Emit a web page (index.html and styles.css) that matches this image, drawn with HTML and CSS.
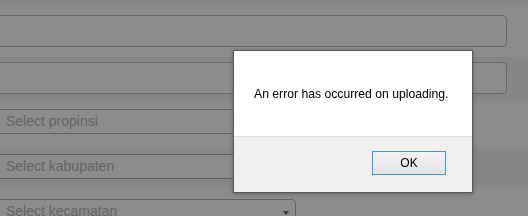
FILE: index.html
```html
<!DOCTYPE html>
<html lang="en">
<head>
    <meta charset="UTF-8">
    <meta name="viewport" content="width=device-width, initial-scale=1.0">
    <title>Upload</title>
    <link rel="stylesheet" href="styles.css">
</head>
<body>
    <div class="pagina">
        <div class="fila oscura fila-tope"></div>
        <div class="fila fila-1">
            <div class="campo"></div>
        </div>
        <div class="fila oscura fila-2">
            <div class="campo"></div>
        </div>
        <div class="fila fila-3">
            <div class="selector">Select propinsi</div>
        </div>
        <div class="fila oscura fila-4">
            <div class="selector">Select kabupaten</div>
        </div>
        <div class="fila fila-5">
            <div class="selector">Select kecamatan<span class="flecha"></span></div>
        </div>
    </div>

    <div class="capa"></div>

    <div class="dialogo">
        <div class="mensaje">An error has occurred on uploading.</div>
        <div class="pie">
            <button class="boton-ok">OK</button>
        </div>
    </div>
</body>
</html>
```

FILE: styles.css
```css
body {
    margin: 0;
    font-family: "Liberation Sans", Arial, sans-serif;
    background-color: #fff;
    overflow: hidden;
}
.pagina {
    height: 216px;
    overflow: hidden;
}
.fila {
    background-color: #fff;
}
.fila.oscura {
    background-color: #f5f5f5;
}
.fila-tope {
    height: 5px;
}
.fila-1 {
    padding: 10px 0;
}
.fila-2 {
    padding: 5px 0 7px;
}
.fila-3 {
    padding: 8px 0 14px;
}
.fila-4 {
    padding: 6px 0 9px;
}
.fila-5 {
    padding: 11px 0 0;
}
.campo {
    box-sizing: border-box;
    margin-left: -5px;
    width: 512px;
    height: 32px;
    border: 1px solid #bdbdbd;
    border-radius: 4px;
    background: #fff;
}
.selector {
    box-sizing: border-box;
    display: flex;
    margin-left: -5px;
    width: 301px;
    height: 25px;
    padding: 3px 6px 4px 10px;
    border: 1px solid #b5b5b5;
    border-radius: 4px;
    background: #fff;
    color: #b6b6b6;
    font-size: 14px;
    line-height: 16px;
}
.flecha {
    margin: 8px 0 0 auto;
    width: 0;
    height: 0;
    border-left: 3px solid transparent;
    border-right: 3px solid transparent;
    border-top: 4px solid #666;
}
.capa {
    position: fixed;
    inset: 0;
    background-color: rgba(0, 0, 0, 0.45);
}
.dialogo {
    position: absolute;
    left: 233px;
    top: 50px;
    width: 240px;
    box-sizing: border-box;
    background: white;
    border: 1px solid #5a5a5a;
    box-shadow: 0px 1px 4px rgba(0, 0, 0, 0.3);
}
.mensaje {
    padding: 36px 20px 35px;
    font-size: 12.2px;
    line-height: 14px;
    color: #000;
}
.pie {
    display: flex;
    justify-content: flex-end;
    padding: 14px 26px 17px;
    background-color: #f0f0f0;
    border-top: 1px solid #dfdfdf;
}
.boton-ok {
    box-sizing: border-box;
    width: 74px;
    height: 24px;
    padding: 0;
    border: 1px solid #3399ff;
    background: linear-gradient(#f2f2f2, #e4e4e4);
    font-family: "Liberation Sans", Arial, sans-serif;
    font-size: 12px;
    color: #000;
}
```
